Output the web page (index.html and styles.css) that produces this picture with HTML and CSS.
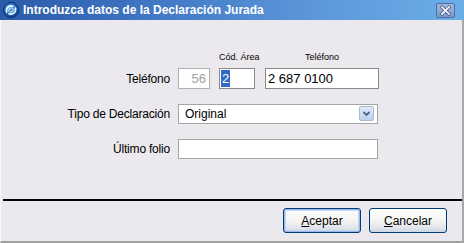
FILE: index.html
```html
<!DOCTYPE html>
<html lang="es">
<head>
<meta charset="utf-8">
<title>Declaración Jurada</title>
<link rel="stylesheet" href="styles.css">
</head>
<body>
<div class="window">
  <div class="titlebar">
    <svg class="app-icon" width="16" height="16" viewBox="0 0 16 16">
      <defs>
        <radialGradient id="g1" cx="45%" cy="40%" r="65%">
          <stop offset="0" stop-color="#5aa6ea"/>
          <stop offset="0.7" stop-color="#1f5eb0"/>
          <stop offset="1" stop-color="#0a2c66"/>
        </radialGradient>
      </defs>
      <circle cx="8" cy="8" r="7.6" fill="url(#g1)" stroke="#08285c" stroke-width="0.8"/>
      <path d="M3.6 10 C2.6 6 6 3 10 4.2" fill="none" stroke="#f2f9ff" stroke-width="1.6" stroke-linecap="round"/>
      <path d="M12.4 6 C13.4 10 10 13 6 11.8" fill="none" stroke="#f2f9ff" stroke-width="1.6" stroke-linecap="round"/>
      <path d="M5.8 9.2 C5.4 7 7 5.6 9 6" fill="none" stroke="#bfe0ff" stroke-width="1.2" stroke-linecap="round"/>
      <path d="M10.2 6.8 C10.6 9 9 10.4 7 10" fill="none" stroke="#bfe0ff" stroke-width="1.2" stroke-linecap="round"/>
    </svg>
    <span class="title">Introduzca datos de la Declaración Jurada</span>
    <span class="close">
      <svg width="19" height="15" viewBox="0 0 19 15">
        <path d="M6 4 L13 11 M13 4 L6 11" stroke="#4a5f8c" stroke-width="3.2" stroke-linecap="square"/>
        <path d="M6 4 L13 11 M13 4 L6 11" stroke="#ffffff" stroke-width="1.6" stroke-linecap="square"/>
      </svg>
    </span>
  </div>
  <div class="content">
    <div class="form">
      <div class="row header-row">
        <span class="label"></span>
        <div class="fields">
          <span class="spacer-56"></span>
          <span class="hdr hdr-area">Cód. Área</span>
          <span class="hdr hdr-phone">Teléfono</span>
        </div>
      </div>
      <div class="row row-phone">
        <span class="label">Teléfono</span>
        <div class="fields">
          <span class="box box-56 disabled">56</span>
          <span class="box box-area"><span class="sel">2</span></span>
          <span class="box box-phone">2 687 0100</span>
        </div>
      </div>
      <div class="row row-tipo">
        <span class="label">Tipo de Declaración</span>
        <div class="fields">
          <span class="box combo">Original
            <span class="drop">
              <svg width="15" height="15" viewBox="0 0 15 15"><path d="M4.5 6 L7.5 9 L10.5 6" fill="none" stroke="#4d6185" stroke-width="1.8"/></svg>
            </span>
          </span>
        </div>
      </div>
      <div class="row row-folio">
        <span class="label">Último folio</span>
        <div class="fields">
          <span class="box box-folio"></span>
        </div>
      </div>
    </div>
    <div class="separator"></div>
    <div class="buttons">
      <span class="btn btn-default"><u>A</u>ceptar</span>
      <span class="btn"><u>C</u>ancelar</span>
    </div>
  </div>
</div>
</body>
</html>
```
FILE: styles.css
```css
html, body {
  margin: 0;
  padding: 0;
  background: #ece9ed;
}
.window {
  width: 464px;
  height: 243px;
  box-sizing: border-box;
  display: flex;
  flex-direction: column;
  background: #ebe9ed;
  font-family: "Liberation Sans", Arial, sans-serif;
  font-size: 12px;
  color: #000;
  overflow: hidden;
}
.titlebar {
  height: 20px;
  flex: none;
  display: flex;
  align-items: center;
  background: linear-gradient(to right, #2a5aa8 0%, #3f74c2 30%, #5a95d8 65%, #6aaee8 100%);
  padding-left: 3px;
}
.app-icon {
  flex: none;
}
.title {
  margin-left: 4px;
  color: #fff;
  font-family: "Liberation Sans", Arial, sans-serif;
  font-weight: bold;
  font-size: 12px;
  flex: 1;
  white-space: nowrap;
}
.close {
  width: 19px;
  height: 15px;
  margin-right: 9px;
  box-sizing: border-box;
  border: 1px solid #4e6a9e;
  border-radius: 2px;
  background: linear-gradient(#a3b8dc, #7d97c7);
  display: flex;
}
.close svg {
  margin: -1px;
}
.content {
  flex: 1;
  display: flex;
  flex-direction: column;
  border-left: 1px solid #fbfbfb;
  border-right: 2px solid #a8a8a8;
  border-bottom: 2px solid #a0a0a0;
}
.form {
  padding-top: 31px;
  display: flex;
  flex-direction: column;
}
.row {
  display: grid;
  grid-template-columns: 169px 1fr;
  column-gap: 8px;
  align-items: center;
}
.label {
  text-align: right;
  white-space: nowrap;
  letter-spacing: -0.2px;
}
.fields {
  display: flex;
  align-items: center;
}
.header-row {
  height: 12px;
  margin-bottom: 5px;
}
.hdr {
  font-size: 9px;
  line-height: 12px;
  text-align: center;
  white-space: nowrap;
}
.spacer-56 { width: 41px; flex: none; }
.hdr-area { width: 36px; margin-right: 10px; flex: none; }
.hdr-phone { width: 114px; flex: none; }
.box {
  box-sizing: border-box;
  height: 20px;
  background: #fff;
  border: 1px solid #9c9c9c;
  display: flex;
  align-items: center;
  padding-left: 3px;
  white-space: nowrap;
}
.row-phone { height: 21px; }
.row-phone .box { height: 21px; font-size: 13px; }
.box-56 {
  width: 32px;
  margin-right: 9px;
  justify-content: flex-end;
  padding-right: 3px;
  color: #a0a0a0;
  border-color: #b0b0b0;
}
.box-area {
  width: 36px;
  margin-right: 10px;
  border-color: #8a8a8a;
  padding-left: 1px;
}
.sel {
  background: #316ac5;
  color: #fff;
  padding: 0 1px;
  line-height: 17px;
}
.box-phone {
  width: 114px;
  border-color: #8a8a8a;
  padding-left: 2px;
}
.row-tipo {
  margin-top: 15px;
  height: 20px;
}
.combo {
  width: 200px;
  height: 20px;
  position: relative;
  padding-left: 6px;
  border-color: #a5a5a5;
}
.drop {
  position: absolute;
  right: 3px;
  top: 1px;
  width: 15px;
  height: 15px;
  box-sizing: border-box;
  border: 1px solid #a9bad6;
  border-radius: 2px;
  background: linear-gradient(#dfeaf9, #bcd0ee);
}
.drop svg { margin: -1px; display: block; }
.row-folio {
  margin-top: 15px;
  height: 20px;
}
.box-folio {
  width: 200px;
  height: 20px;
  border-color: #a5a5a5;
}
.separator {
  margin-top: 40px;
  margin-left: 2px;
  height: 2px;
  flex: none;
  background: #000;
}
.buttons {
  display: flex;
  justify-content: flex-end;
  gap: 8px;
  padding-top: 7px;
  padding-right: 15px;
}
.btn {
  box-sizing: border-box;
  width: 78px;
  height: 25px;
  display: flex;
  align-items: center;
  justify-content: center;
  border: 1px solid #003c74;
  border-radius: 3px;
  background: linear-gradient(#ffffff 0%, #f4f4f0 50%, #e3e6ec 80%, #cdd6e6 100%);
  font-size: 12px;
}
.btn-default {
  box-shadow: inset 0 0 0 1px #9ab8ea, inset 0 0 0 2px #c4d5f3;
}
```
